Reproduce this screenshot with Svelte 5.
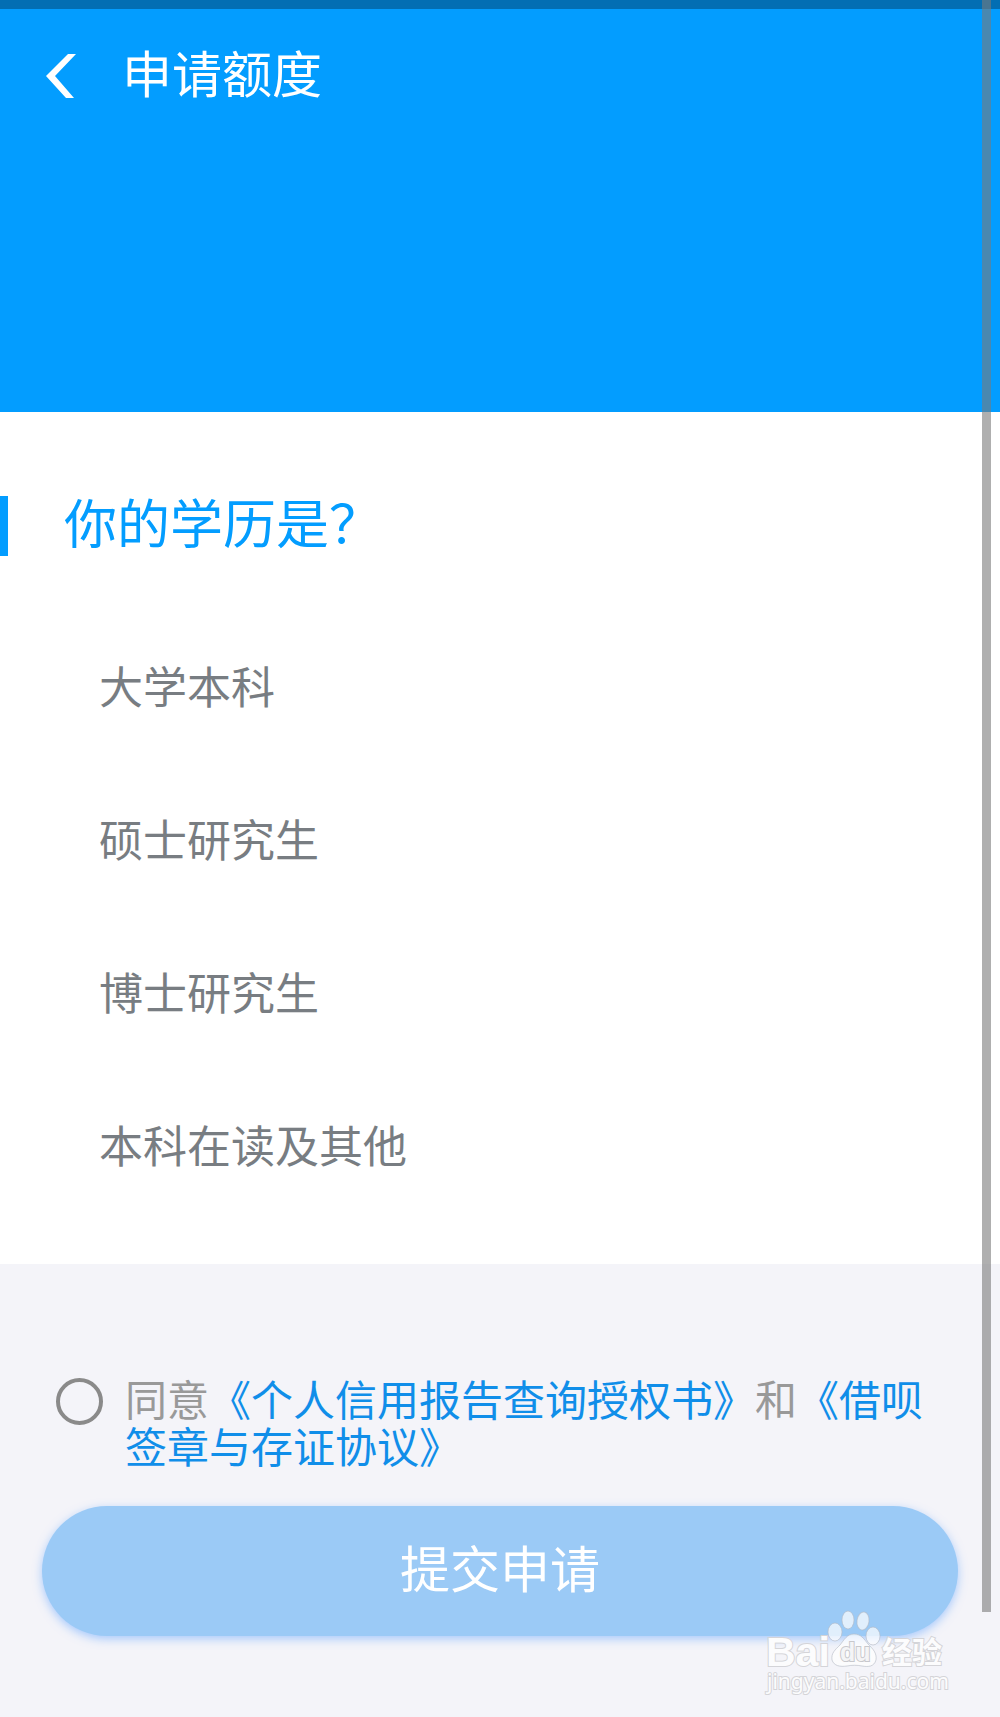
<script>
    let education = $state("");
    let agreed = $state(false);

    const options = ["大学本科", "硕士研究生", "博士研究生", "本科在读及其他"];

    function goBack() {
        history.back();
    }

    function submitApplication(event) {
        event.preventDefault();
    }
</script>

<div class="page">
    <header>
        <div class="status-bar"></div>
        <div class="title-bar">
            <button class="back" type="button" aria-label="返回" onclick={goBack}>
                <svg width="30" height="44" viewBox="0 0 30 44">
                    <path d="M22 0H30L9 22L28 44H20L0 22Z" fill="#fff" />
                </svg>
            </button>
            <h1>申请额度</h1>
        </div>
    </header>

    <form onsubmit={submitApplication}>
        <section class="question" role="radiogroup" aria-labelledby="question-title">
            <h2 id="question-title">你的学历是？</h2>
            {#each options as option}
                <label class="option">
                    <input type="radio" name="education" value={option} bind:group={education}>
                    <span>{option}</span>
                </label>
            {/each}
        </section>

        <div class="footer">
            <div class="agreement">
                <input id="agree" type="checkbox" bind:checked={agreed}>
                <p><label for="agree">同意</label><a href="#credit">《个人信用报告查询授权书》</a>和<a href="#sign">《借呗签章与存证协议》</a></p>
            </div>
            <button class="submit-button" type="submit">提交申请</button>
        </div>
    </form>

    <div class="scrollbar"></div>

    <svg class="watermark" width="190" height="98" viewBox="0 0 190 98" aria-hidden="true">
        <g fill="#fff" fill-opacity="0.7" stroke="#b4b9c3" stroke-opacity="0.6" stroke-width="1">
            <ellipse cx="75" cy="32" rx="7" ry="9" />
            <ellipse cx="88" cy="20" rx="6" ry="9" />
            <ellipse cx="103" cy="21" rx="6" ry="9" transform="rotate(8 103 21)" />
            <ellipse cx="113" cy="36" rx="7" ry="9" />
            <path d="M94 34C101 34 104 39 108 44C113 49 117 53 116 60C114 67 108 67 102 66C97 65 92 65 87 66C80 67 74 66 72 60C71 53 75 50 80 45C84 40 87 34 94 34Z" />
        </g>
        <g class="outlined">
            <text class="bai" x="6" y="66">Bai</text>
            <text class="du" x="80" y="61">du</text>
            <text class="cn" x="122" y="63">经验</text>
            <text class="domain" x="7" y="89">jingyan.baidu.com</text>
        </g>
    </svg>
</div>

<style>
    :global(body) {
        margin: 0;
        background-color: #f4f4f9;
    }

    .page {
        position: relative;
        overflow: hidden;
        font-family: "Liberation Sans", "Noto Sans CJK SC", sans-serif;
    }

    header {
        height: 412px;
        background-color: #039dff;
    }

    .status-bar {
        height: 9px;
        background-color: #036eb3;
    }

    .title-bar {
        display: flex;
        align-items: center;
        gap: 46px;
        padding: 32px 46px;
    }

    h1, h2, p {
        margin: 0;
        font-weight: 400;
    }

    h1 {
        font-size: 50px;
        line-height: 70px;
        color: #fff;
    }

    button {
        padding: 0;
        border: none;
        font-family: inherit;
        cursor: pointer;
    }

    .back {
        display: flex;
        background: none;
    }

    .question {
        padding: 84px 0 40px;
        background-color: #fff;
    }

    h2 {
        padding-left: 56px;
        margin-bottom: 56px;
        border-left: 8px solid #039dff;
        font-size: 53px;
        line-height: 60px;
        color: #039dff;
    }

    .option {
        display: block;
        padding-left: 99px;
        font-size: 44px;
        line-height: 153px;
        color: #787d82;
        cursor: pointer;
    }

    .option input {
        position: absolute;
        opacity: 0;
    }

    .option input:checked + span {
        color: #039dff;
    }

    .footer {
        padding: 114px 42px 81px;
    }

    .agreement {
        display: flex;
        align-items: flex-start;
        gap: 22px;
        padding: 0 32px 0 14px;
        margin-bottom: 34px;
    }

    .agreement input {
        flex: none;
        box-sizing: border-box;
        width: 47px;
        height: 47px;
        margin: 0;
        border: 4px solid #8a8a8a;
        border-radius: 50%;
        appearance: none;
    }

    .agreement input:checked {
        border-color: #108ee9;
        background-color: #108ee9;
    }

    .agreement p {
        font-size: 42px;
        line-height: 47px;
        color: #999;
    }

    .agreement a {
        color: #108ee9;
        text-decoration: none;
    }

    .submit-button {
        display: block;
        width: 100%;
        height: 130px;
        border-radius: 65px;
        background-color: #9bcaf6;
        box-shadow: 0 3px 10px rgba(90, 160, 255, 0.5);
        font-size: 50px;
        line-height: 130px;
        color: #fff;
    }

    .scrollbar {
        position: absolute;
        top: 0;
        right: 9px;
        bottom: 105px;
        width: 9px;
        background-color: rgba(122, 122, 122, 0.6);
    }

    .watermark {
        position: absolute;
        right: 50px;
        bottom: 19px;
    }

    .outlined text {
        fill: #fcfcfd;
        stroke: #d4d4d8;
        stroke-width: 2px;
        paint-order: stroke;
    }

    .outlined .bai {
        font: bold 41px "Liberation Sans", sans-serif;
    }

    .outlined .du {
        fill: #f4f4f6;
        stroke: #c8c8cc;
        font: bold 25px "Liberation Sans", sans-serif;
    }

    .outlined .cn {
        font: bold 30px "Noto Sans CJK SC", sans-serif;
    }

    .outlined .domain {
        font: 21px "Noto Sans", sans-serif;
    }
</style>
